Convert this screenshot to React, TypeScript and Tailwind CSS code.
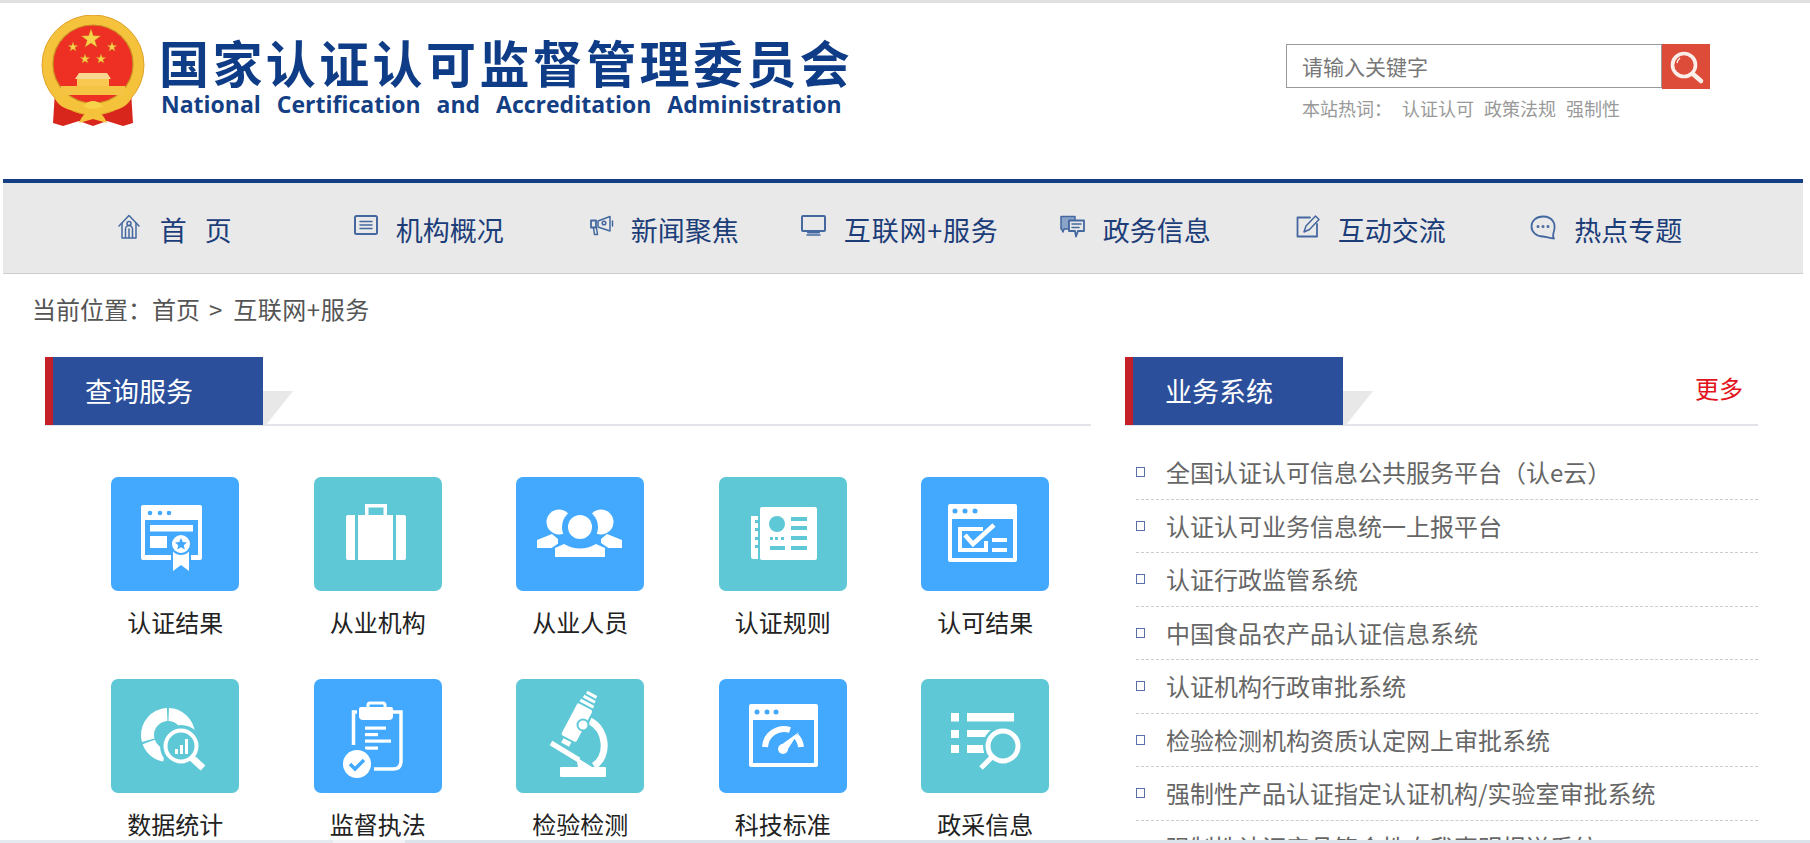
import type { ReactNode } from "react";

const BLUE = "bg-[#42a9ff]";
const TEAL = "bg-[#5fc8d6]";

function Emblem() {
  const star = (cx: number, cy: number, r: number) => {
    const pts: string[] = [];
    for (let i = 0; i < 10; i++) {
      const a = (Math.PI / 5) * i - Math.PI / 2;
      const rr = i % 2 === 0 ? r : r * 0.4;
      pts.push(`${(cx + rr * Math.cos(a)).toFixed(2)},${(cy + rr * Math.sin(a)).toFixed(2)}`);
    }
    return <polygon points={pts.join(" ")} fill="#f8d24a" stroke="#c9902a" strokeWidth="0.4" />;
  };
  return (
    <svg viewBox="0 0 104 112" className="h-[112px] w-[104px] shrink-0 blur-[0.5px]">
      <path d="M14 76 L12 108 L22 111 L38 106 L52 111 L66 106 L82 111 L92 108 L90 76 Z" fill="#d9261c" />
      <ellipse cx="52" cy="50" rx="51" ry="50" fill="#f5c33b" />
      <ellipse cx="52" cy="50" rx="51" ry="50" fill="none" stroke="#e0a02c" strokeWidth="1" />
      <ellipse cx="52" cy="49" rx="40" ry="39" fill="#ee2f23" stroke="#c98a22" strokeWidth="1.2" />
      {star(50, 24, 10)}
      {star(32, 32, 5)}
      {star(71, 32, 5)}
      {star(44, 44, 5)}
      {star(60, 44, 5)}
      <path d="M38 58 H66 L70 64 H34 Z" fill="#f8d890" />
      <rect x="36" y="64" width="32" height="7" fill="#f8c850" />
      <rect x="20" y="71" width="64" height="9" fill="#f6c445" />
      <path d="M17 78 C24 92 40 90 52 86 C64 90 80 92 87 78 L90 84 C82 98 64 97 52 93 C40 97 22 98 14 84 Z" fill="#f5c33b" />
      <path d="M38 108 C41 100 46 96 52 96 C58 96 63 100 66 108 L52 104 Z" fill="#f5c33b" />
      <path d="M42 91 Q52 81 62 91 Q52 97 42 91 Z" fill="#f8d24a" />
    </svg>
  );
}

function SearchGlyph() {
  return (
    <svg viewBox="0 0 48 45" className="h-[45px] w-[48px]">
      <circle cx="22" cy="21" r="11.5" fill="none" stroke="#fbeee9" strokeWidth="3.6" />
      <path d="M18 14 A9 9 0 0 0 15 19" fill="none" stroke="#fbeee9" strokeWidth="1.4" />
      <path d="M31 30 L39 37" stroke="#fbeee9" strokeWidth="4.6" strokeLinecap="round" />
    </svg>
  );
}

const navStroke = {
  fill: "none",
  stroke: "#44689f",
  strokeWidth: 1.5,
  strokeLinejoin: "round" as const,
  strokeLinecap: "round" as const,
};

const NAV_ICONS: Record<string, ReactNode> = {
  home: (
    <g {...navStroke}>
      <path d="M1 12 L11 1.500 L21 12" />
      <path d="M4 9.500 V24 H18 V9.500" />
      <circle cx="11" cy="9.500" r="2" />
      <path d="M7.500 23.500 V15 A3.500 3.500 0 0 1 14.500 15 V23.500 M11 15 V23.500" />
    </g>
  ),
  list: (
    <g {...navStroke} strokeWidth={2}>
      <rect x="2" y="2" width="22" height="18" rx="1.500" />
      <path d="M7 7.500 H19 M7 11 H19 M7 14.500 H19" strokeWidth={1.5} />
    </g>
  ),
  horn: (
    <g {...navStroke}>
      <path d="M9 7 L21 2.500 V17 L9 13 Z" />
      <path d="M2 6.500 H7 V13.500 H2 Z" strokeWidth={1.8} />
      <path d="M4.500 14 L5.500 20.500 H8.500 L7.500 14" />
      <path d="M23.500 7 V12" />
      <circle cx="15" cy="9" r="1.800" />
    </g>
  ),
  screen: (
    <g {...navStroke} strokeWidth={2}>
      <rect x="2" y="2" width="23" height="15" rx="1" />
      <path d="M8 17 V18.500 H19 V17" />
      <path d="M7 21 H20" strokeWidth={1.5} />
    </g>
  ),
  chat: (
    <g {...navStroke}>
      <path d="M2 2.500 H16 V7 H10 V15 H5 L4 18 L2.500 15 H2 Z" fill="#8aa3c6" />
      <path d="M10 6.500 H25 V17 H19 L17 22.500 L16 17 H10 Z" fill="#e8e8e9" strokeWidth={1.8} />
      <path d="M13 10 H22 M13 13.500 H20" />
    </g>
  ),
  edit: (
    <g {...navStroke}>
      <path d="M15 3.500 H2.500 V22.500 H22 V10" strokeWidth={1.8} />
      <path d="M9 18 L11 12 L20.500 2 L24 5.500 L14.500 15.500 Z" />
    </g>
  ),
  bubble: (
    <g {...navStroke} strokeWidth={1.8}>
      <path d="M14 2.500 C7 2.500 2.500 7 2.500 12.500 C2.500 18 7.500 22.500 14 22.500 C16 22.500 21 24.500 25 24.500 C23.500 22.500 24 20 25 17 C25.800 15 25.800 10 24.500 8 C22.500 4.500 18.500 2.500 14 2.500 Z" />
      <circle cx="9" cy="12.500" r="0.600" fill="#44689f" />
      <circle cx="14" cy="12.500" r="0.600" fill="#44689f" />
      <circle cx="19" cy="12.500" r="0.600" fill="#44689f" />
    </g>
  ),
};

const NAV_ITEMS = [
  { icon: "home", label: "首   页", gap: "gap-[20px]", extra: "mr-[18px]", box: "w-[22px]", vb: "0 0 22 26", text: "" },
  { icon: "list", label: "机构概况", gap: "gap-[17px]", extra: "", box: "w-[26px]", vb: "0 0 26 26", text: "" },
  { icon: "horn", label: "新闻聚焦", gap: "gap-[16px]", extra: "", box: "w-[26px]", vb: "0 0 26 26", text: "" },
  { icon: "screen", label: "互联网+服务", gap: "gap-[17px]", extra: "", box: "w-[27px]", vb: "0 0 27 26", text: "tracking-[0.8px]" },
  { icon: "chat", label: "政务信息", gap: "gap-[18px]", extra: "", box: "w-[26px]", vb: "0 0 26 26", text: "" },
  { icon: "edit", label: "互动交流", gap: "gap-[17px]", extra: "", box: "w-[26px]", vb: "0 0 26 26", text: "" },
  { icon: "bubble", label: "热点专题", gap: "gap-[17px]", extra: "", box: "w-[28px]", vb: "0 0 28 26", text: "" },
];

// service tile glyphs, drawn in the 128x114 tile space
const W = "#ffffff";

function CertIcon() {
  return (
    <>
      <path fillRule="evenodd" fill={W} d="M32 28 H89 Q91 28 91 30 V81 Q91 83 89 83 H32 Q30 83 30 81 V30 Q30 28 32 28 Z M34 43 V78 H87 V43 Z" />
      <circle cx="39" cy="36" r="2.300" fill="#42a9ff" />
      <circle cx="49" cy="36" r="2.300" fill="#42a9ff" />
      <circle cx="58" cy="36" r="2.300" fill="#42a9ff" />
      <rect x="39" y="48" width="43" height="6.500" fill={W} />
      <rect x="39" y="59" width="17" height="12" fill={W} />
      <path d="M60 70 H80 V84 H60 Z" fill="#42a9ff" />
      <path d="M62 72 V94 L70 88 L78 94 V72 Z" fill={W} />
      <circle cx="70" cy="67" r="11" fill="#42a9ff" />
      <circle cx="70" cy="67" r="9" fill={W} />
      <path d="M70 61 L71.800 65 L76 65.400 L72.800 68.200 L73.800 72.500 L70 70.200 L66.200 72.500 L67.200 68.200 L64 65.400 L68.200 65 Z" fill="#42a9ff" />
    </>
  );
}

function CaseIcon() {
  return (
    <>
      <path fillRule="evenodd" fill={W} d="M51 38 V27 H73 V38 H69.500 V30.500 H54.500 V38 Z" />
      <path d="M44 38 H79 V83 H44 Z" fill={W} />
      <path d="M34 38 H41 V83 H34 Q32 83 32 81 V40 Q32 38 34 38 Z" fill={W} />
      <path d="M82 38 H90 Q92 38 92 40 V81 Q92 83 90 83 H82 Z" fill={W} />
    </>
  );
}

function PeopleIcon() {
  return (
    <>
      <circle cx="43" cy="45" r="12.500" fill={W} />
      <circle cx="85" cy="45" r="12.500" fill={W} />
      <path d="M21 63 L36 57 L42 62 V71 H21 Z" fill={W} />
      <path d="M106 63 L91 57 L85 62 V71 H106 Z" fill={W} />
      <circle cx="64" cy="50" r="18" fill="#42a9ff" />
      <circle cx="64" cy="50" r="12" fill={W} />
      <path d="M34 82 V72 L46 64 Q64 74 82 64 L94 72 V82 Z" fill="#42a9ff" />
      <path d="M39 80 V71 L48 67 Q64 76 80 67 L89 71 V80 Z" fill={W} />
    </>
  );
}

function CardIcon() {
  return (
    <>
      <path d="M43 30 H96 Q98 30 98 32 V81 Q98 83 96 83 H43 Q41 83 41 81 V32 Q41 30 43 30 Z" fill={W} />
      <path d="M32 39 H39 V82 H34 Q32 82 32 80 Z" fill={W} />
      <g fill="#5fc8d6">
        <rect x="36" y="43" width="3" height="3" />
        <rect x="36" y="51" width="3" height="3" />
        <rect x="36" y="60" width="3" height="3" />
        <rect x="36" y="68" width="3" height="3" />
        <circle cx="58" cy="47" r="8" />
        <rect x="72" y="40" width="16" height="4" />
        <rect x="72" y="49" width="16" height="4" />
        <rect x="72" y="59" width="16" height="4" />
        <rect x="72" y="69" width="16" height="4" />
        <rect x="51" y="60" width="3" height="3" />
        <rect x="56" y="60" width="3" height="3" />
        <rect x="62" y="60" width="3" height="3" />
        <rect x="51" y="69" width="15" height="4" />
      </g>
    </>
  );
}

function CheckWindowIcon() {
  return (
    <>
      <path fillRule="evenodd" fill={W} d="M29 27 H94 Q96 27 96 29 V83 Q96 85 94 85 H29 Q27 85 27 83 V29 Q27 27 29 27 Z M31 42 V81 H92 V42 Z" />
      <circle cx="34" cy="34" r="2.500" fill="#42a9ff" />
      <circle cx="44" cy="34" r="2.500" fill="#42a9ff" />
      <circle cx="54" cy="34" r="2.500" fill="#42a9ff" />
      <path d="M62 52 H39 V73 H65 V64" fill="none" stroke={W} strokeWidth="4" />
      <path d="M44 58 L52 67 L73 48" fill="none" stroke={W} strokeWidth="4.500" />
      <rect x="71" y="61" width="15" height="4" fill={W} />
      <rect x="71" y="71" width="15" height="4" fill={W} />
    </>
  );
}

function DataIcon() {
  return (
    <>
      <g fill="none" stroke={W} strokeWidth="13">
        <circle cx="57" cy="56" r="20.500" pathLength="360" strokeDasharray="83 360" transform="rotate(-88 57 56)" />
        <circle cx="57" cy="56" r="20.500" pathLength="360" strokeDasharray="103 360" transform="rotate(165 57 56)" />
        <circle cx="57" cy="56" r="20.500" pathLength="360" strokeDasharray="60 360" transform="rotate(100 57 56)" />
      </g>
      <circle cx="70" cy="67" r="21" fill="#5fc8d6" />
      <circle cx="70" cy="67" r="15.500" fill="none" stroke={W} strokeWidth="4" />
      <path d="M81 79 L92 89" stroke={W} strokeWidth="7" />
      <rect x="64" y="70" width="3" height="5" fill={W} />
      <rect x="69" y="66" width="3" height="9" fill={W} />
      <rect x="74" y="60" width="3" height="15" fill={W} />
    </>
  );
}

function ClipboardIcon() {
  return (
    <>
      <path d="M43 33 H39.500 V66 M79 33 H87 V82 Q87 90 79 90 H60" fill="none" stroke={W} strokeWidth="3.500" />
      <path d="M54 32 V26 Q54 24 56 24 H69 Q71 24 71 26 V28" fill="none" stroke={W} strokeWidth="3" />
      <path d="M47 28 H77 Q79 28 79 30 V37 Q79 41 75 41 H49 Q45 41 45 37 V30 Q45 28 47 28 Z" fill={W} />
      <rect x="51" y="47.500" width="21" height="3.200" fill={W} />
      <rect x="51" y="54" width="13" height="3.200" fill={W} />
      <rect x="51" y="60.500" width="26" height="3.200" fill={W} />
      <rect x="51" y="67.500" width="13" height="3.200" fill={W} />
      <circle cx="43" cy="85" r="17" fill="#42a9ff" />
      <circle cx="43" cy="85" r="14" fill={W} />
      <path d="M36 85 L41 90 L50 81" fill="none" stroke="#42a9ff" strokeWidth="3.500" />
    </>
  );
}

function ScopeIcon() {
  return (
    <>
      <rect x="44" y="88" width="46" height="10" rx="1" fill={W} />
      <g transform="rotate(28 60 42)">
        <rect x="53" y="25" width="17" height="36" rx="2" fill={W} />
        <rect x="56" y="10" width="11" height="3" fill={W} />
        <rect x="55" y="15" width="13" height="3" fill={W} />
        <rect x="54" y="20" width="15" height="3" fill={W} />
        <rect x="57" y="63" width="9" height="5" fill={W} />
      </g>
      <path d="M74 42 C90 50 94 76 78 87" fill="none" stroke={W} strokeWidth="7" />
      <circle cx="67" cy="46" r="5.500" fill={W} stroke="#5fc8d6" strokeWidth="2" />
      <path d="M35 64 L63 81" stroke={W} strokeWidth="5" />
      <path d="M60 78 L62 88 H76 Z" fill={W} />
    </>
  );
}

function GaugeIcon() {
  return (
    <>
      <path fillRule="evenodd" fill={W} d="M32 25 H97 Q99 25 99 27 V86 Q99 88 97 88 H32 Q30 88 30 86 V27 Q30 25 32 25 Z M34 41 V84 H95 V41 Z" />
      <circle cx="38" cy="33" r="2.500" fill="#42a9ff" />
      <circle cx="48" cy="33" r="2.500" fill="#42a9ff" />
      <circle cx="57" cy="33" r="2.500" fill="#42a9ff" />
      <path d="M46 68 A19 19 0 0 1 71 51" fill="none" stroke={W} strokeWidth="6" />
      <path d="M77 57 A19 19 0 0 1 82 68" fill="none" stroke={W} strokeWidth="6" />
      <path d="M62 66 L80 53 L67 73 Z" fill={W} />
      <circle cx="64" cy="70" r="5" fill={W} />
    </>
  );
}

function ListSearchIcon() {
  return (
    <>
      <rect x="30" y="34" width="8" height="8.500" fill={W} />
      <rect x="30" y="51" width="8" height="8" fill={W} />
      <rect x="30" y="66" width="8" height="8" fill={W} />
      <rect x="46" y="34" width="47" height="8.500" fill={W} />
      <path d="M46 51 H70 L66 58 H46 Z" fill={W} />
      <path d="M46 66 H63 V74 H46 Z" fill={W} />
      <circle cx="82" cy="67" r="20" fill="#5fc8d6" />
      <circle cx="82" cy="67" r="15" fill="none" stroke={W} strokeWidth="5" />
      <path d="M71 78 L60 89" stroke={W} strokeWidth="5" />
    </>
  );
}

const SERVICES = [
  { label: "认证结果", bg: BLUE, icon: <CertIcon /> },
  { label: "从业机构", bg: TEAL, icon: <CaseIcon /> },
  { label: "从业人员", bg: BLUE, icon: <PeopleIcon /> },
  { label: "认证规则", bg: TEAL, icon: <CardIcon /> },
  { label: "认可结果", bg: BLUE, icon: <CheckWindowIcon /> },
  { label: "数据统计", bg: TEAL, icon: <DataIcon /> },
  { label: "监督执法", bg: BLUE, icon: <ClipboardIcon /> },
  { label: "检验检测", bg: TEAL, icon: <ScopeIcon /> },
  { label: "科技标准", bg: BLUE, icon: <GaugeIcon /> },
  { label: "政采信息", bg: TEAL, icon: <ListSearchIcon /> },
];

const SYSTEMS = [
  "全国认证认可信息公共服务平台（认e云）",
  "认证认可业务信息统一上报平台",
  "认证行政监管系统",
  "中国食品农产品认证信息系统",
  "认证机构行政审批系统",
  "检验检测机构资质认定网上审批系统",
  "强制性产品认证指定认证机构/实验室审批系统",
  "强制性认证产品符合性自我声明报送系统",
];

function SectionHead({ title, more }: { title: string; more?: boolean }) {
  return (
    <div className="flex h-[69px] items-stretch border-b-2 border-[#e2e4ea]">
      <div className="flex h-[68px] w-[218px] items-center border-l-[8px] border-[#c4202a] bg-[#2b4f9b] pl-[32px] text-[27px] leading-[34px] text-white">
        {title}
      </div>
      <svg viewBox="0 0 30 34" className="mt-[34px] h-[34px] w-[30px]">
        <polygon points="0,0 30,0 3,34 0,34" fill="#e8e8e8" />
      </svg>
      {more && <a className="ml-auto mr-[15px] mt-[16px] text-[24px] leading-[30px] text-[#e2131c]">更多</a>}
    </div>
  );
}

export default function App() {
  return (
    <div className="relative h-[843px] w-[1810px] overflow-hidden bg-white font-['Noto_Sans_CJK_SC','Liberation_Sans',sans-serif]">
      <div className="h-[3px] bg-[#e0e0e0]" />
      <div className="ml-[3px] w-[1800px]">
        <header className="flex h-[176px]">
          <div className="flex pl-[38px] pt-[12px]">
            <Emblem />
            <div className="ml-[14px]">
              <div className="mt-[18px] whitespace-nowrap text-[50px] font-bold leading-[56px] tracking-[3.4px] text-[#0f3c87]">
                国家认证认可监督管理委员会
              </div>
              <div className="ml-[2px] mt-[1px] whitespace-nowrap font-['Open_Sans',sans-serif] text-[23px] font-bold leading-[28px] text-[#143f85] [word-spacing:10px]">
                National Certification and Accreditation Administration
              </div>
            </div>
          </div>
          <div className="ml-auto mr-[93px] pt-[41px]">
            <div className="flex h-[45px]">
              <input
                placeholder="请输入关键字"
                className="h-[44px] w-[376px] border border-[#999] bg-white pl-[15px] text-[21px] outline-none placeholder:text-[#777]"
              />
              <button className="h-[45px] w-[48px] bg-[#dd4b39]">
                <SearchGlyph />
              </button>
            </div>
            <div className="mt-[6px] flex pl-[16px] text-[18px] leading-[26px] text-[#999]">
              <span className="w-[100px]">本站热词：</span>
              <span className="mr-[10px]">认证认可</span>
              <span className="mr-[10px]">政策法规</span>
              <span>强制性</span>
            </div>
          </div>
        </header>

        <nav className="flex h-[95px] items-center border-t-4 border-b border-t-[#143f85] border-b-[#cccccc] bg-[#e9e9ea] pl-[54px] text-[#1c3d78]">
          {NAV_ITEMS.map((n) => (
            <div key={n.icon} className={`flex w-[235.500px] items-center justify-center ${n.gap} ${n.extra}`}>
              <svg viewBox={n.vb} className={`mt-[-3px] h-[26px] ${n.box}`}>
                {NAV_ICONS[n.icon]}
              </svg>
              <span className={`mt-[3px] whitespace-pre text-[27px] leading-[34px] ${n.text}`}>{n.label}</span>
            </div>
          ))}
        </nav>

        <div className="flex h-[83px] pl-[29px] pt-[20px] text-[24px] leading-[30px] text-[#555]">
          <span>当前位置：首页</span>
          <span className="ml-[9px] mr-[11px]">&gt;</span>
          <span className="tracking-[0.5px]">互联网+服务</span>
        </div>

        <div className="flex">
          <section className="ml-[42px] w-[1046px]">
            <SectionHead title="查询服务" />
            <div className="grid grid-cols-[repeat(5,202.500px)] gap-y-[42px] pl-[29px] pt-[51px]">
              {SERVICES.map((s) => (
                <div key={s.label} className="flex flex-col items-center">
                  <div className={`h-[114px] w-[128px] rounded-[7px] ${s.bg}`}>
                    <svg viewBox="0 0 128 114" className="h-full w-full">
                      {s.icon}
                    </svg>
                  </div>
                  <div className="mt-[16px] text-[24px] leading-[30px] text-[#222]">{s.label}</div>
                </div>
              ))}
            </div>
          </section>

          <section className="ml-[34px] w-[633px]">
            <SectionHead title="业务系统" more />
            <ul className="ml-[11px] mt-[20px]">
              {SYSTEMS.map((s) => (
                <li
                  key={s}
                  className="flex h-[53.500px] items-center gap-[21px] border-b border-dashed border-[#cccccc] text-[24px] text-[#666]"
                >
                  <span className="h-[10px] w-[9px] shrink-0 border-[1.500px] border-[#5b6fa8]" />
                  <span className="whitespace-nowrap leading-[30px]">{s}</span>
                </li>
              ))}
            </ul>
          </section>
        </div>
      </div>

      <div className="absolute bottom-0 left-0 flex h-[3px] w-full">
        <div className="w-[333px] bg-[#e5eaf0]" />
        <div className="w-[72px] bg-[#f1f3f6]" />
        <div className="flex-1 bg-[#dde3ea]" />
      </div>
    </div>
  );
}
